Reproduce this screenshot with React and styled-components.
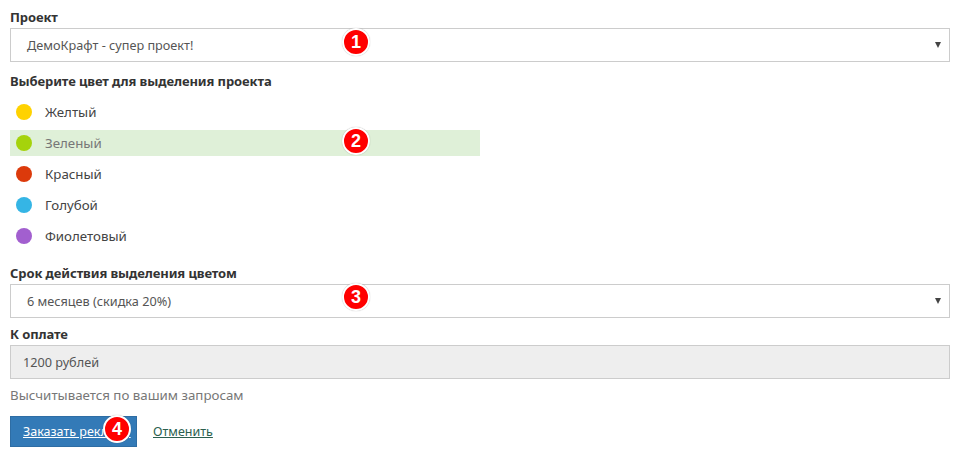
import React from "react";
import styled, { createGlobalStyle } from "styled-components";

const GlobalStyle = createGlobalStyle`
  body {
    margin: 0;
    background: #fff;
    font-family: "Noto Sans", "Open Sans", sans-serif;
    font-size: 13px;
    color: #333;
  }
`;

const Page = styled.div`
  width: 940px;
  padding: 6px 11px 0 10px;
  position: relative;
`;

const Field = styled.div`
  position: relative;
  display: flex;
  flex-direction: column;
`;

const Label = styled.div`
  font-weight: 700;
  font-size: 13px;
  color: #333;
  height: 22px;
  line-height: 22px;
  letter-spacing: -0.1px;
  margin-top: ${(p) => p.$gap || 0}px;
`;

const Select = styled.div`
  height: 32px;
  border: 1px solid #ccc;
  background: ${(p) => (p.$readonly ? "#eee" : "#fff")};
  display: flex;
  align-items: center;
  justify-content: space-between;
  padding: 0 8px 0 ${(p) => (p.$readonly ? "12px" : "16px")};
  color: #555;
  font-size: 12.7px;
`;

const Caret = styled.span`
  width: 0;
  height: 0;
  border-left: 3px solid transparent;
  border-right: 3px solid transparent;
  border-top: 6px solid #444;
`;

const ColorList = styled.div`
  display: flex;
  flex-direction: column;
  padding: 7px 0 8px;
`;

const ColorRow = styled.div`
  position: relative;
  width: 470px;
  height: 26px;
  margin-bottom: 5px;
  display: flex;
  align-items: center;
  gap: 13px;
  padding-left: 6px;
  box-sizing: border-box;
  background: ${(p) => (p.$active ? "#dff0d8" : "transparent")};
  color: ${(p) => (p.$active ? "#777" : "#444")};
  font-size: 13.3px;
`;

const Dot = styled.span`
  width: 16px;
  height: 16px;
  border-radius: 50%;
  background: ${(p) => p.$color};
`;

const Hint = styled.div`
  color: #777;
  font-size: 13.3px;
  margin-top: 6px;
  height: 20px;
  line-height: 20px;
`;

const Actions = styled.div`
  position: relative;
  display: flex;
  align-items: center;
  gap: 16px;
  margin-top: 11px;
`;

const Button = styled.button`
  width: 127px;
  height: 31px;
  background: #337ab7;
  border: 1px solid #2e6da4;
  color: #fff;
  font-family: inherit;
  font-size: 12.5px;
  text-decoration: underline;
  text-align: left;
  padding: 0 12px;
  white-space: nowrap;
  overflow: hidden;
`;

const CancelLink = styled.a`
  color: #2b5f4f;
  font-size: 12.5px;
  text-decoration: underline;
`;

const Badge = styled.span`
  position: absolute;
  left: ${(p) => p.$x}px;
  top: ${(p) => p.$y}px;
  width: 28px;
  height: 28px;
  border-radius: 50%;
  background: #f00;
  border: 2px solid #fff;
  box-shadow: 0 0 1px rgba(0, 0, 0, 0.35);
  color: #fff;
  font-family: "Liberation Sans", Arial, sans-serif;
  font-weight: 700;
  font-size: 18px;
  display: flex;
  align-items: center;
  justify-content: center;
  box-sizing: border-box;
`;

const colors = [
  { name: "Желтый", color: "#ffd200" },
  { name: "Зеленый", color: "#a5d30b", active: true },
  { name: "Красный", color: "#dc3a0b" },
  { name: "Голубой", color: "#35b5e5" },
  { name: "Фиолетовый", color: "#a25fcf" },
];

export default function App() {
  return (
    <>
      <GlobalStyle />
      <Page>
        <Field>
          <Label>Проект</Label>
          <Select>
            <span>ДемоКрафт - супер проект!</span>
            <Caret />
          </Select>
          <Badge $x={332} $y={22}>1</Badge>
        </Field>
        <Field>
          <Label $gap={8}>Выберите цвет для выделения проекта</Label>
          <ColorList>
            {colors.map((c) => (
              <ColorRow key={c.name} $active={c.active}>
                <Dot $color={c.color} />
                {c.name}
                {c.active && <Badge $x={332} $y={-3}>2</Badge>}
              </ColorRow>
            ))}
          </ColorList>
        </Field>
        <Field>
          <Label>Срок действия выделения цветом</Label>
          <Select>
            <span>6 месяцев (скидка 20%)</span>
            <Caret />
          </Select>
          <Badge $x={332} $y={21}>3</Badge>
        </Field>
        <Field>
          <Label $gap={5}>К оплате</Label>
          <Select $readonly>
            <span>1200 рублей</span>
          </Select>
        </Field>
        <Hint>Высчитывается по вашим запросам</Hint>
        <Actions>
          <Button>Заказать рекламу</Button>
          <CancelLink href="#">Отменить</CancelLink>
          <Badge $x={93} $y={-1}>4</Badge>
        </Actions>
      </Page>
    </>
  );
}
